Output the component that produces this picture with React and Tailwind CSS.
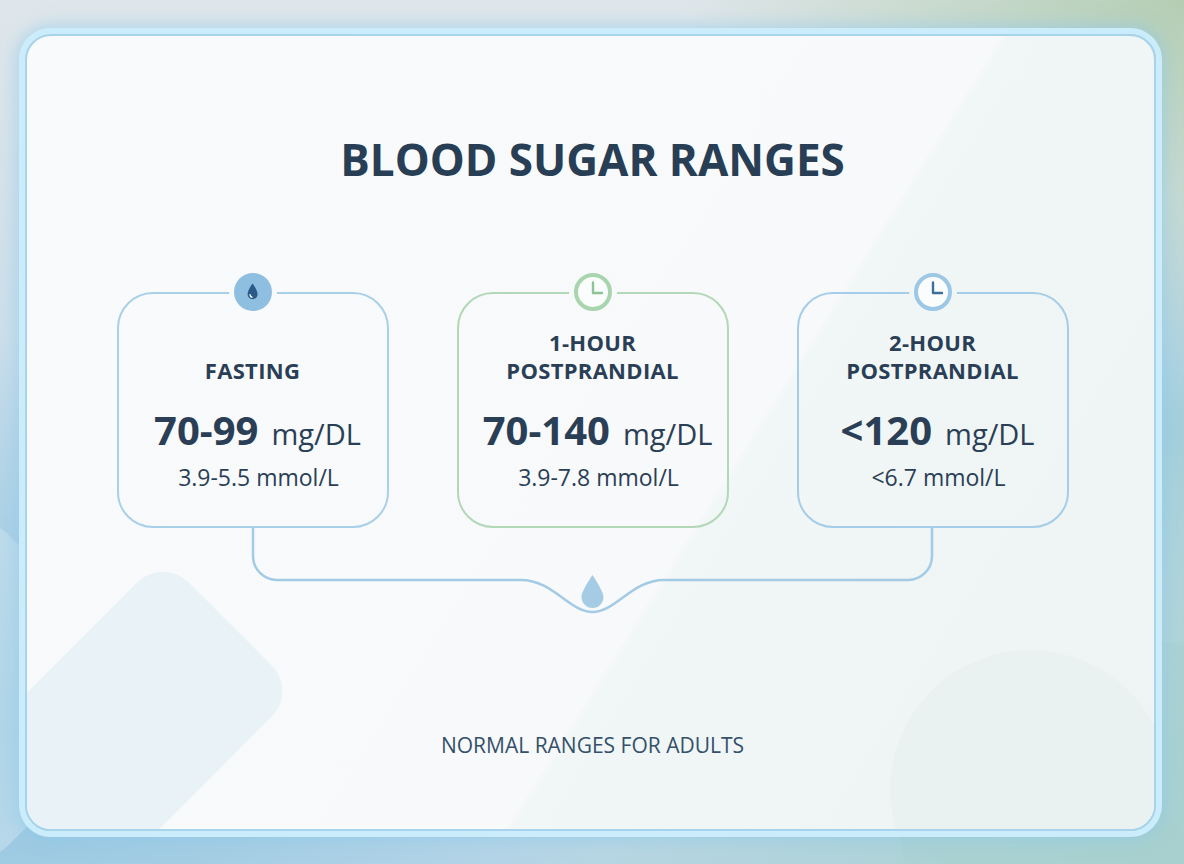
import React from "react";

function DropIcon() {
  return (
    <svg width="38" height="38" viewBox="0 0 38 38">
      <circle cx="19" cy="19" r="19" fill="#8ebfe1" />
      <path d="M18.6 10.5 C18.6 10.5 13.6 17.2 13.6 21.2 A5 5 0 0 0 23.6 21.2 C23.6 17.2 18.6 10.5 18.6 10.5 Z" fill="#2c5a86" />
      <path d="M16 21.6 A2.7 2.7 0 0 0 17.9 24.2" stroke="#ffffff" strokeWidth="1.4" fill="none" strokeLinecap="round" />
    </svg>
  );
}

function ClockIcon({ ring, hand }) {
  return (
    <svg width="38" height="38" viewBox="0 0 38 38">
      <circle cx="19" cy="19" r="17" fill="#fbfdfd" stroke={ring} strokeWidth="4" />
      <path d="M19 9.5 V20 H28" stroke={hand} strokeWidth="2.4" fill="none" strokeLinecap="round" strokeLinejoin="round" />
    </svg>
  );
}

function Card({ border, gapBg, icon, title, value, mmol }) {
  return (
    <div className={`relative w-[272px] h-[236px] shrink-0 rounded-[36px] border-[2.5px] ${border} flex flex-col items-center text-[#2a3f56]`}>
      <div className={`absolute left-1/2 -top-[21px] -translate-x-1/2 px-[5px] rounded-full ${gapBg}`}>{icon}</div>
      <div className="mt-[34px] h-[56px] flex flex-col justify-end items-center text-[22px] leading-[28px] font-bold tracking-[0.3px]">
        {title.map((t) => (
          <div key={t}>{t}</div>
        ))}
      </div>
      <div className="mt-[24px] h-[44px] flex items-baseline pl-[10px]">
        <span className="text-[40px] leading-[44px] font-bold">{value}</span>
        <span className="ml-[13px] text-[29px] leading-[44px] font-normal">mg/DL</span>
      </div>
      <div className="mt-[11px] text-[23px] leading-[28px] pl-[12px]">{mmol}</div>
    </div>
  );
}

export default function App() {
  return (
    <div className="relative w-[1184px] h-[864px] overflow-hidden font-['Open_Sans','Noto_Sans',sans-serif] bg-[radial-gradient(ellipse_at_0%_85%,#92c5e0_0%,rgba(146,197,224,0)_38%),radial-gradient(ellipse_at_100%_100%,#a6d0cc_0%,rgba(166,208,204,0)_42%),radial-gradient(ellipse_at_100%_0%,#b4ceb4_0%,rgba(180,206,180,0)_30%),radial-gradient(ellipse_at_100%_50%,#a3cedc_0%,rgba(163,206,220,0)_40%),linear-gradient(180deg,#dfe6ea_0%,#c7dcea_50%,#bad7e8_100%)]">
      {/* outer decorative shapes */}
      <div className="absolute left-[-150px] top-[560px] w-[260px] h-[260px] rotate-45 rounded-[40px] bg-[#cfe5f0]/50" />
      <div className="absolute left-[900px] top-[640px] w-[420px] h-[360px] rounded-full bg-[#a8d0d0]/60" />

      <div className="relative flex h-full pt-[28px] pl-[19px] pr-[22px] pb-[27px]">
        <div className="flex-1 rounded-[32px] border-[6px] border-[#cbedfb] shadow-[0_0_16px_3px_rgba(140,200,235,0.55)]">
          <div className="relative h-full rounded-[26px] border-2 border-[#a7d3eb] overflow-hidden bg-[linear-gradient(122deg,#f8fafb_0%,#f7f9fa_60%,#f1f6f6_60.6%,#edf4f3_100%)]">
            {/* panel decorative shapes */}
            <div className="absolute left-[2px] top-[544px] w-[190px] h-[300px] rotate-45 rounded-[36px] bg-[#e9f2f7]" />
            <div className="absolute left-[863px] top-[614px] w-[280px] h-[280px] rounded-full bg-[#eaf2f1]" />

            <div className="relative flex flex-col items-center pl-[4px]">
              <h1 className="mt-[97px] text-[44px] leading-[53px] font-bold text-[#283e55]">BLOOD SUGAR RANGES</h1>

              <div className="mt-[106px] flex gap-[68px]">
                <Card
                  border="border-[#a9d0e9]"
                  gapBg="bg-[#f7f9fa]"
                  icon={<DropIcon />}
                  title={["FASTING"]}
                  value="70-99"
                  mmol="3.9-5.5 mmol/L"
                />
                <Card
                  border="border-[#b3d8b8]"
                  gapBg="bg-[#f7f9fa]"
                  icon={<ClockIcon ring="#a9d5ae" hand="#8cc495" />}
                  title={["1-HOUR", "POSTPRANDIAL"]}
                  value="70-140"
                  mmol="3.9-7.8 mmol/L"
                />
                <Card
                  border="border-[#a5cde8]"
                  gapBg="bg-[#f0f5f5]"
                  icon={<ClockIcon ring="#9cc8e6" hand="#3e6e9b" />}
                  title={["2-HOUR", "POSTPRANDIAL"]}
                  value="<120"
                  mmol="<6.7 mmol/L"
                />
              </div>

              <svg width="952" height="90" viewBox="0 0 952 90" className="block overflow-visible">
                <path
                  d="M136 0 V28 A24 24 0 0 0 160 52 H404 C436 52 452 84 475.5 84 C499 84 515 52 547 52 H791 A24 24 0 0 0 815 28 V0"
                  fill="none"
                  stroke="#a3cbe6"
                  strokeWidth="2.5"
                />
                <path
                  d="M475.5 47 C475.5 47 464.5 63 464.5 69 A11 11 0 0 0 486.5 69 C486.5 63 475.5 47 475.5 47 Z"
                  fill="#a6cbe4"
                />
              </svg>

              <div className="mt-[113px] text-[21px] leading-[28px] text-[#34506a]">NORMAL RANGES FOR ADULTS</div>
            </div>
          </div>
        </div>
      </div>
    </div>
  );
}
